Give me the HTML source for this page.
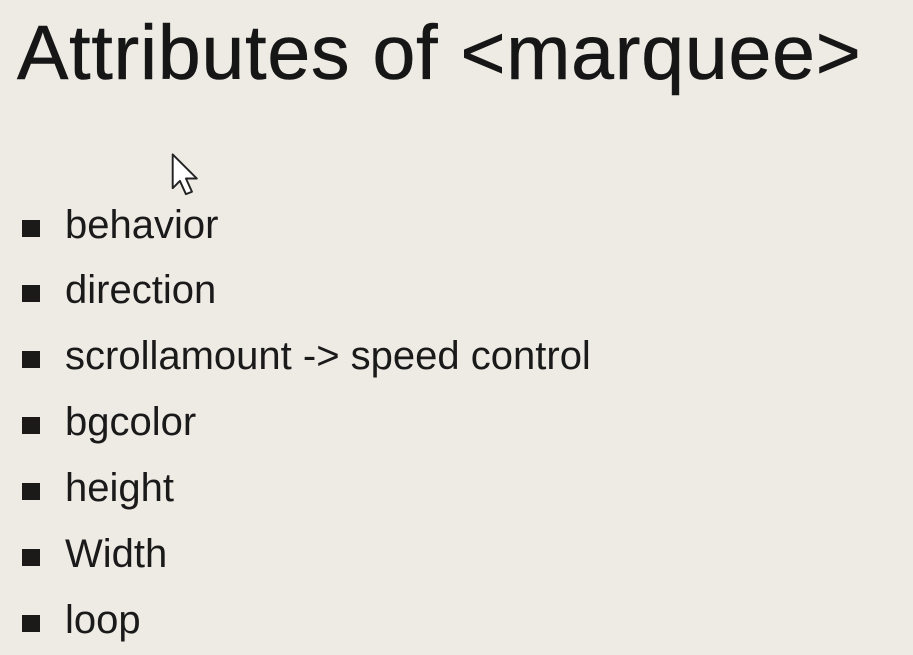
<!DOCTYPE html>
<html><head><style>
html,body{margin:0;padding:0}
body{width:913px;height:655px;background:#eeeae4;position:relative;overflow:hidden;font-family:"Liberation Sans",Arial,sans-serif;color:#1a1a1a}
h1{position:absolute;left:17px;top:3px;margin:0;font-weight:normal;font-size:77px;letter-spacing:0.8px;line-height:100px;white-space:nowrap;color:#161616;-webkit-text-stroke:0.6px #161616}
.li{position:absolute;left:65px;font-size:40px;line-height:40px;white-space:nowrap}
.sq{position:absolute;left:22px;width:18px;height:17px;background:#1c1a18}
</style></head><body>
<h1>Attributes of &lt;marquee&gt;</h1>
<svg style="position:absolute;left:170px;top:152px" width="32" height="44" viewBox="0 0 30 42"><path d="M2 2 L2 30 L8 24 L13 35 L18 33 L13 22 L22 22 Z" fill="#fff" stroke="#222" stroke-width="1.6" stroke-linejoin="round" transform="scale(1.15)"/></svg>
<div class="sq" style="top:220px"></div><div class="li" style="top:205px">behavior</div>
<div class="sq" style="top:285px"></div><div class="li" style="top:270px">direction</div>
<div class="sq" style="top:351px"></div><div class="li" style="top:336px">scrollamount -&gt; speed control</div>
<div class="sq" style="top:417px"></div><div class="li" style="top:402px">bgcolor</div>
<div class="sq" style="top:483px"></div><div class="li" style="top:468px">height</div>
<div class="sq" style="top:549px"></div><div class="li" style="top:534px">Width</div>
<div class="sq" style="top:615px"></div><div class="li" style="top:600px">loop</div>
</body></html>
